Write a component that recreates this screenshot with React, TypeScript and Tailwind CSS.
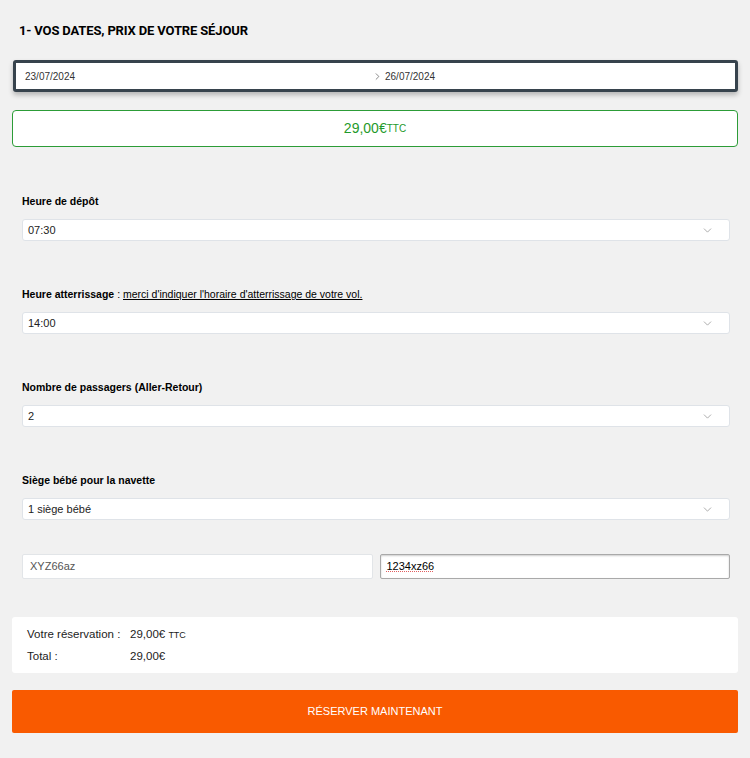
import { ChevronDown, ChevronRight } from 'lucide-react';

const font = { fontFamily: '"Liberation Sans", Arial, sans-serif' };

function SelectField({ label, value }: { label: React.ReactNode; value: string }) {
  return (
    <div className="ml-[10px] mr-[8px] flex flex-col">
      <div className="text-[10.5px] leading-[14px] text-black">{label}</div>
      <div className="mt-[11px] flex h-[22px] items-center justify-between rounded-[3px] border border-[#dfe3e8] bg-white pl-[5px] pr-[15px] text-[11px] text-[#222]">
        <span>{value}</span>
        <ChevronDown className="h-[13px] w-[13px] text-[#9a9a9a]" strokeWidth={1.5} />
      </div>
    </div>
  );
}

export default function App() {
  return (
    <div className="min-h-[758px] bg-[#f1f1f1] px-[12px] pt-[23px]" style={font}>
      <h2 className="pl-[7px] text-[13px] font-bold leading-[15px] tracking-[-0.15px] text-black" style={{ fontFamily: 'Roboto, sans-serif' }}>
        1- VOS DATES, PRIX DE VOTRE SÉJOUR
      </h2>

      <div className="ml-[1px] mt-[22px] flex h-[32px] items-center rounded-[3px] border-[3px] border-[#37434d] bg-white text-[10px] text-[#333] shadow-[0_3px_5px_rgba(0,0,0,0.25)]">
        <span className="w-[345px] pl-[9px]">23/07/2024</span>
        <ChevronRight className="ml-[11px] h-[11px] w-[11px] text-[#555]" strokeWidth={1.5} />
        <span className="ml-[2px]">26/07/2024</span>
      </div>

      <div className="mt-[18px] flex h-[37px] items-center justify-center rounded-[4px] border-[1.5px] border-[#2c9c37] bg-white text-[#1f9a2b]">
        <span className="text-[14px]">29,00€</span>
        <span className="text-[10px]">TTC</span>
      </div>

      <div className="mt-[47px] flex flex-col gap-[46px]">
        <SelectField label={<b>Heure de dépôt</b>} value="07:30" />
        <SelectField
          label={
            <>
              <b>Heure atterrissage</b> : <span className="underline">merci d'indiquer l'horaire d'atterrissage de votre vol.</span>
            </>
          }
          value="14:00"
        />
        <SelectField label={<b>Nombre de passagers (Aller-Retour)</b>} value="2" />
        <SelectField label={<b>Siège bébé pour la navette</b>} value="1 siège bébé" />
      </div>

      <div className="ml-[10px] mr-[8px] mt-[34px] grid grid-cols-2 gap-[7px]">
        <div className="flex h-[25px] items-center rounded-[2px] border border-[#e2e5e8] bg-white px-[7px] text-[11px] text-[#555]">XYZ66az</div>
        <div className="flex h-[25px] items-center rounded-[2px] border border-[#a9a9a9] bg-white px-[6px] text-[11px] text-black shadow-[inset_0_1px_2px_rgba(0,0,0,0.2)]">
          <span className="underline decoration-[#e06060] decoration-dotted">1234xz66</span>
        </div>
      </div>

      <div className="mt-[38px] flex flex-col gap-[5px] rounded-[3px] bg-white px-[15px] py-[9px] text-[11.5px] leading-[16px] text-[#222]">
        <div className="flex">
          <span className="w-[103px]">Votre réservation :</span>
          <span>
            29,00€ <span className="text-[9px]">TTC</span>
          </span>
        </div>
        <div className="flex">
          <span className="w-[103px]">Total :</span>
          <span>29,00€</span>
        </div>
      </div>

      <button className="mt-[17px] flex h-[43px] w-full items-center justify-center rounded-[2px] bg-[#f95a00] text-[11px] font-medium text-white">
        RÉSERVER MAINTENANT
      </button>
    </div>
  );
}
